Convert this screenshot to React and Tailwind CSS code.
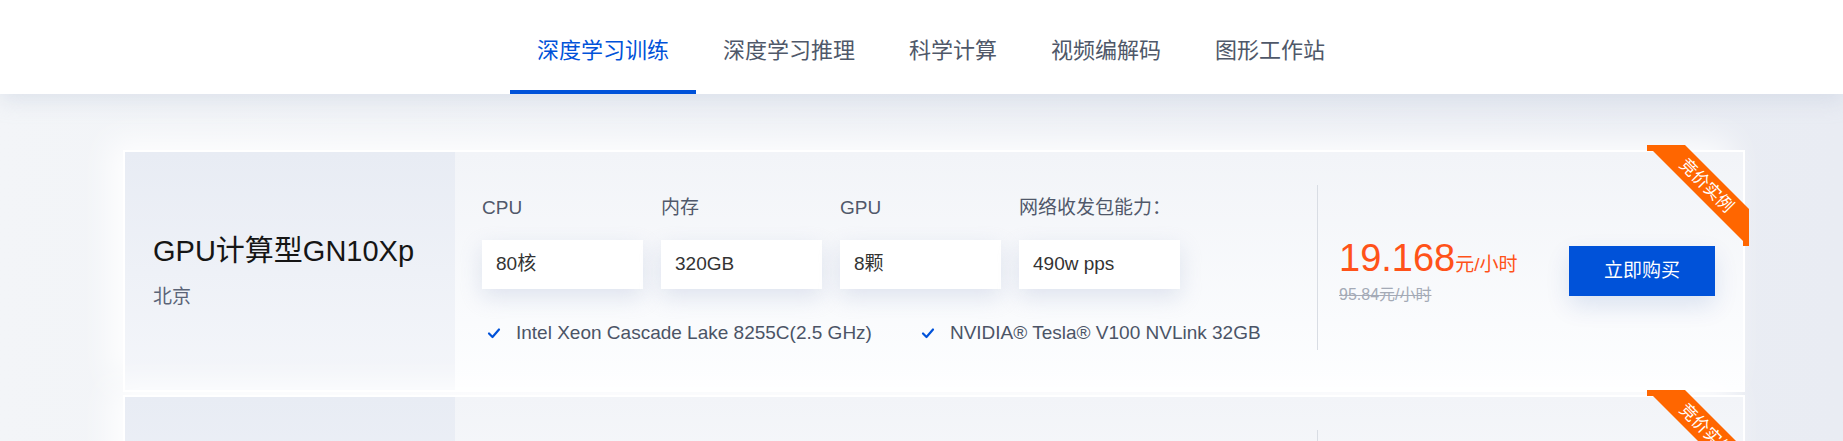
import React from 'react';

const tabs = ['深度学习训练', '深度学习推理', '科学计算', '视频编解码', '图形工作站'];

const products = [
    {
        name: 'GPU计算型GN10Xp',
        region: '北京',
        specs: [
            ['CPU', '80核'],
            ['内存', '320GB'],
            ['GPU', '8颗'],
            ['网络收发包能力：', '490w pps'],
        ],
        features: ['Intel Xeon Cascade Lake 8255C(2.5 GHz)', 'NVIDIA® Tesla® V100 NVLink 32GB'],
        price: '19.168',
        oldPrice: '95.84',
    },
    {
        name: 'GPU计算型GN10X',
        region: '上海',
        specs: [
            ['CPU', '72核'],
            ['内存', '320GB'],
            ['GPU', '8颗'],
            ['网络收发包能力：', '450w pps'],
        ],
        features: ['Intel Xeon Skylake 6133(2.5 GHz)', 'NVIDIA® Tesla® V100 NVLink 32GB'],
        price: '17.568',
        oldPrice: '87.84',
    },
];

const Check = () => (
    <svg width="14" height="12" viewBox="0 0 14 12" fill="none" className="shrink-0">
        <polyline points="2,6.5 5.5,10 12,2.5" stroke="#0052d9" strokeWidth="2.2" strokeLinecap="round" strokeLinejoin="round" />
    </svg>
);

const Ribbon = () => (
    <div className="absolute -top-[7px] -right-[6px] w-[102px] h-[101px] z-10 bg-[#ff6600] [clip-path:polygon(0_0,38px_0,102px_64px,102px_101px,96px_101px,96px_96px,6px_6px,0_6px)]">
        <span className="absolute left-[59px] top-[41px] -translate-x-1/2 -translate-y-1/2 rotate-45 whitespace-nowrap text-[17px] leading-[20px] text-white">
            竞价实例
        </span>
    </div>
);

const ProductCard = ({ item }) => (
    <div className="relative flex h-[242px] border-2 border-white bg-gradient-to-b from-[#f2f4f8] to-[#fdfeff] shadow-[-14px_-10px_30px_rgba(255,255,255,0.9)]">
        <Ribbon />

        {/* name / region */}
        <div className="w-[330px] shrink-0 flex flex-col justify-center pl-[28px] bg-gradient-to-b from-[#e8ecf4] to-[#f4f6fa]">
            <div className="text-[29px] leading-[34px] text-[#151515]">{item.name}</div>
            <div className="mt-[18px] text-[19px] leading-[22px] text-[#5b6477]">{item.region}</div>
        </div>

        {/* specs */}
        <div className="w-[862px] shrink-0 pl-[27px] pt-[44px]">
            <div className="grid grid-cols-[repeat(4,161px)] gap-x-[18px]">
                {item.specs.map(([label]) => (
                    <div key={label} className="text-[19px] leading-[24px] text-[#50586a]">{label}</div>
                ))}
            </div>
            <div className="mt-[20px] grid grid-cols-[repeat(4,161px)] gap-x-[18px]">
                {item.specs.map(([label, value]) => (
                    <div
                        key={label}
                        className="h-[49px] flex items-center pl-[14px] bg-white text-[19px] text-[#333333] shadow-[0_8px_22px_rgba(190,200,222,0.45)]"
                    >
                        {value}
                    </div>
                ))}
            </div>
            <div className="mt-[32px] flex items-center gap-[49px] pl-[5px]">
                {item.features.map((f) => (
                    <div key={f} className="flex items-center gap-[15px] text-[19px] leading-[24px] text-[#4b5466]">
                        <Check />
                        <span>{f}</span>
                    </div>
                ))}
            </div>
        </div>

        <div className="w-px h-[165px] mt-[33px] bg-[#d9dde4]"></div>

        {/* price */}
        <div className="flex-1 flex items-center justify-between pl-[21px] pr-[28px]">
            <div>
                <div className="flex items-baseline text-[#ff5219]">
                    <span className="text-[38px] leading-[44px]">{item.price}</span>
                    <span className="text-[19px]">元/小时</span>
                </div>
                <div className="mt-[4px] text-[16px] leading-[22px] text-[#a4aab6] line-through">{item.oldPrice}元/小时</div>
            </div>
            <button className="w-[146px] h-[50px] bg-[#0052d9] text-white text-[19px] shadow-[0_10px_24px_rgba(0,60,160,0.12)]">
                立即购买
            </button>
        </div>
    </div>
);

const App = () => {
    return (
        <div className="min-h-screen bg-gradient-to-r from-[#f3f5f8] to-[#e9ecf3] font-['Liberation_Sans','Noto_Sans_CJK_SC',sans-serif]">
            <header className="relative z-20 h-[94px] bg-white shadow-[0_6px_20px_rgba(180,192,212,0.35)]">
                <nav className="ml-[120px] w-[1622px] h-full flex justify-center">
                    {tabs.map((t, i) => (
                        <div
                            key={t}
                            className={`h-full px-[27px] pt-[12px] flex items-center border-b-4 text-[22px] leading-[30px] ${
                                i === 0 ? 'border-[#0052d9] text-[#0052d9]' : 'border-transparent text-[#4f5869]'
                            }`}
                        >
                            {t}
                        </div>
                    ))}
                </nav>
            </header>

            <main className="pt-[56px] pl-[123px]">
                <div className="w-[1622px] flex flex-col gap-[3px]">
                    {products.map((p) => (
                        <ProductCard key={p.name} item={p} />
                    ))}
                </div>
            </main>
        </div>
    );
};

export default App;
